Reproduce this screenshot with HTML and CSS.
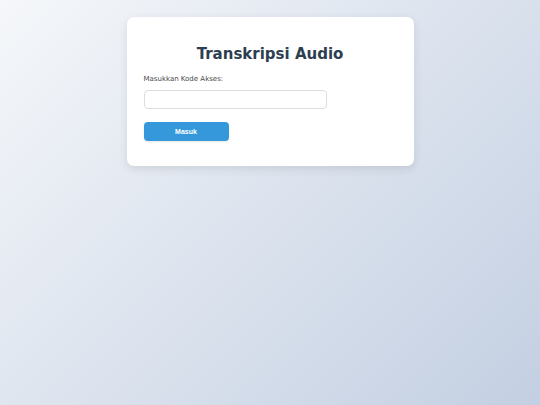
FILE: index.html
```html
<!DOCTYPE html>
<html lang="id">
<head>
<meta charset="utf-8">
<title>Transkripsi Audio</title>
<link rel="stylesheet" href="styles.css">
</head>
<body>
<div class="card">
  <h1 class="title">Transkripsi Audio</h1>
  <label class="label" for="kode">Masukkan Kode Akses:</label>
  <input class="input" id="kode" type="text">
  <button class="btn" type="button">Masuk</button>
</div>
</body>
</html>
```
FILE: styles.css
```css
html, body {
  margin: 0;
  height: 100%;
}
body {
  background: linear-gradient(135deg, #f5f7fa 0%, #c3cfe2 100%);
  font-family: "DejaVu Sans", Verdana, sans-serif;
  padding-top: 17px;
  box-sizing: border-box;
}
.card {
  width: 287px;
  margin: 0 auto;
  background: #fff;
  border-radius: 7px;
  box-shadow: 0 3px 10px rgba(0, 0, 0, 0.1);
  padding: 28px 17px 25px;
  box-sizing: border-box;
  display: flex;
  flex-direction: column;
  align-items: flex-start;
}
.title {
  align-self: stretch;
  text-align: center;
  font-size: 15px;
  font-weight: bold;
  color: #2c3e50;
  margin: 0 0 11px;
  line-height: 18px;
}
.label {
  font-size: 7px;
  color: #4a4a4a;
  line-height: 10px;
  margin-bottom: 6px;
}
.input {
  width: 183px;
  height: 19px;
  box-sizing: border-box;
  border: 1px solid #ddd;
  border-radius: 4px;
  padding: 0 5px;
  margin: 0 0 13px;
}
.btn {
  width: 85px;
  height: 19px;
  border: none;
  border-radius: 4px;
  background: #3498db;
  color: #fff;
  font-family: "Liberation Sans", Arial, sans-serif;
  font-size: 7px;
  font-weight: 600;
  padding: 0;
  box-shadow: 0 1px 2px rgba(0,0,0,0.1);
}
```
